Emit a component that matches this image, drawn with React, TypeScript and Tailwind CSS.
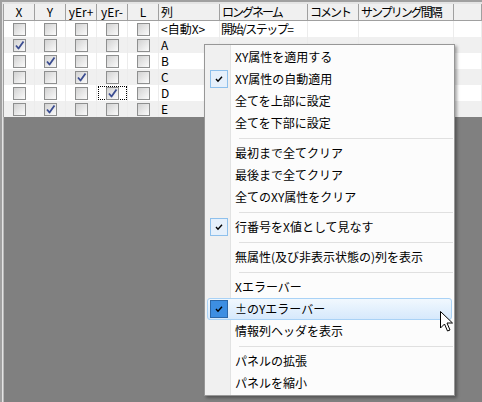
import React from 'react';

const font = "font-['Noto_Sans_CJK_JP','Noto_Sans',sans-serif]";

const headers = ['X', 'Y', 'yEr+', 'yEr-', 'L', '列', 'ロングネーム', 'コメント', 'サンプリング間隔', ''];
const widths = ['w-[31px]', 'w-[31px]', 'w-[31px]', 'w-[31px]', 'w-[31px]', 'w-[61px]', 'w-[88px]', 'w-[51px]', 'w-[95px]', 'flex-1'];

type Row = { label: string; long?: string; checked: number; shaded: boolean; focus?: boolean };

const rows: Row[] = [
  { label: '<自動X>', long: '開始/ステップ=', checked: -1, shaded: false },
  { label: 'A', checked: 0, shaded: true },
  { label: 'B', checked: 1, shaded: false },
  { label: 'C', checked: 2, shaded: true },
  { label: 'D', checked: 3, shaded: false, focus: true },
  { label: 'E', checked: 1, shaded: true },
];

type Item =
  | { kind: 'sep' }
  | { kind: 'item'; text: string; checked?: boolean; hot?: boolean };

const menu: Item[] = [
  { kind: 'item', text: 'XY属性を適用する' },
  { kind: 'item', text: 'XY属性の自動適用', checked: true },
  { kind: 'item', text: '全てを上部に設定' },
  { kind: 'item', text: '全てを下部に設定' },
  { kind: 'sep' },
  { kind: 'item', text: '最初まで全てクリア' },
  { kind: 'item', text: '最後まで全てクリア' },
  { kind: 'item', text: '全てのXY属性をクリア' },
  { kind: 'sep' },
  { kind: 'item', text: '行番号をX値として見なす', checked: true },
  { kind: 'sep' },
  { kind: 'item', text: '無属性(及び非表示状態の)列を表示' },
  { kind: 'sep' },
  { kind: 'item', text: 'Xエラーバー' },
  { kind: 'item', text: '±のYエラーバー', checked: true, hot: true },
  { kind: 'item', text: '情報列ヘッダを表示' },
  { kind: 'sep' },
  { kind: 'item', text: 'パネルの拡張' },
  { kind: 'item', text: 'パネルを縮小' },
];

const GridCheck: React.FC<{ on: boolean }> = ({ on }) => (
  <span className="relative flex h-[13px] w-[13px] items-center justify-center border border-[#8e8f8f] bg-linear-to-br from-[#d2d2d2] to-[#fbfbfb]">
    {on && (
      <svg width="11" height="11" viewBox="0 0 11 11" className="absolute">
        <path d="M2 5.5 L4.5 8.5 L9.5 1.5" fill="none" stroke="#3b4d91" strokeWidth="1.8" strokeLinejoin="round" />
      </svg>
    )}
  </span>
);

const MenuCheck: React.FC<{ hot?: boolean }> = ({ hot }) => (
  <span
    className={
      hot
        ? 'flex h-[18px] w-[18px] items-center justify-center border border-[#2a66a8] bg-[#3d8ee2]'
        : 'flex h-[18px] w-[18px] items-center justify-center border border-[#8ec0ec] bg-[#e6f0fb]'
    }
  >
    <svg width="10" height="10" viewBox="0 0 10 10">
      <path d="M2 5 L4 7.2 L8 2.8" fill="none" stroke="#000" strokeWidth="1.4" />
    </svg>
  </span>
);

const App: React.FC = () => (
  <div className={`relative h-[402px] w-[482px] overflow-hidden bg-[#808080] text-[12px] text-black ${font}`}>
    <div className="flex h-full flex-col border-l-2 border-t-2 border-[#a0a0a0]">
      <div className="flex h-full flex-col border-l border-t-2 border-[#e4e4e4]">
        <div className="border-l border-[#a0a0a0]">
          {/* header */}
          <div className="flex h-[17px] border-b border-[#a0a0a0] bg-[#f0f0f0]">
            {headers.map((h, i) => (
              <div
                key={i}
                className={`${widths[i]} ${i < 5 ? 'justify-center' : 'pl-[2px]'} ${
                  i > 5 ? 'tracking-[-2px]' : ''
                } flex shrink-0 items-center overflow-hidden whitespace-nowrap border-r border-[#a0a0a0] leading-[16px]`}
              >
                {h}
              </div>
            ))}
          </div>
          {/* rows */}
          {rows.map((r, ri) => (
            <div key={ri} className={`flex h-[16px] ${r.shaded ? 'bg-[#f0f0f0]' : 'bg-white'}`}>
              {headers.map((_, ci) => (
                <div
                  key={ci}
                  className={`${widths[ci]} flex shrink-0 items-center overflow-hidden whitespace-nowrap border-r border-[#ececec] leading-[16px]`}
                >
                  {ci < 5 && (
                    <div
                      className={`mx-auto flex h-[14px] w-[29px] items-center justify-center ${
                        r.focus && ci === r.checked ? 'border border-dotted border-black' : ''
                      }`}
                    >
                      <GridCheck on={ci === r.checked} />
                    </div>
                  )}
                  {ci === 5 && <span className="pl-[2px]">{r.label}</span>}
                  {ci === 6 && r.long && <span className="pl-[1px] tracking-[-1.5px]">{r.long}</span>}
                </div>
              ))}
            </div>
          ))}
        </div>
        <div className="flex-1 border-l border-[#b8b8b8] bg-[#808080]" />
      </div>
    </div>

    {/* context menu */}
    <div className="absolute left-[204px] top-[44px] w-[251px] border border-[#979797] bg-[#fcfcfc] py-px shadow-[2px_2px_3px_rgba(0,0,0,0.35)]">
      <div className="pointer-events-none absolute bottom-0 left-0 top-0 w-[26px] border-r border-[#e2e3e3] bg-[#f0f0f0]" />
      {menu.map((m, i) =>
        m.kind === 'sep' ? (
          <div key={i} className="relative flex h-[8px] items-center pl-[34px] pr-[1px]">
            <div className="h-px w-full bg-[#e0e0e0]" />
          </div>
        ) : (
          <div key={i} className="relative flex h-[22px] items-center">
            {m.hot && (
              <div className="absolute inset-x-[2px] inset-y-0 rounded-[3px] border border-[#a9d2f6] bg-linear-to-b from-[#f1f8fe] to-[#d6e9fc]" />
            )}
            <div className="relative flex w-[26px] shrink-0 justify-center pl-[1px]">
              {m.checked && <MenuCheck hot={m.hot} />}
            </div>
            <span className="relative whitespace-nowrap pl-[4px] leading-[22px]">{m.text}</span>
          </div>
        ),
      )}
    </div>

    {/* mouse cursor */}
    <svg className="absolute left-[440px] top-[311px]" width="14" height="22" viewBox="0 0 14 22">
      <path
        d="M0.5 0.5 L0.5 17 L4.5 13 L7.5 20 L10 19 L7 12 L12.5 12 Z"
        fill="#fff"
        stroke="#000"
        strokeWidth="1"
        strokeLinejoin="miter"
      />
    </svg>
  </div>
);

export default App;
